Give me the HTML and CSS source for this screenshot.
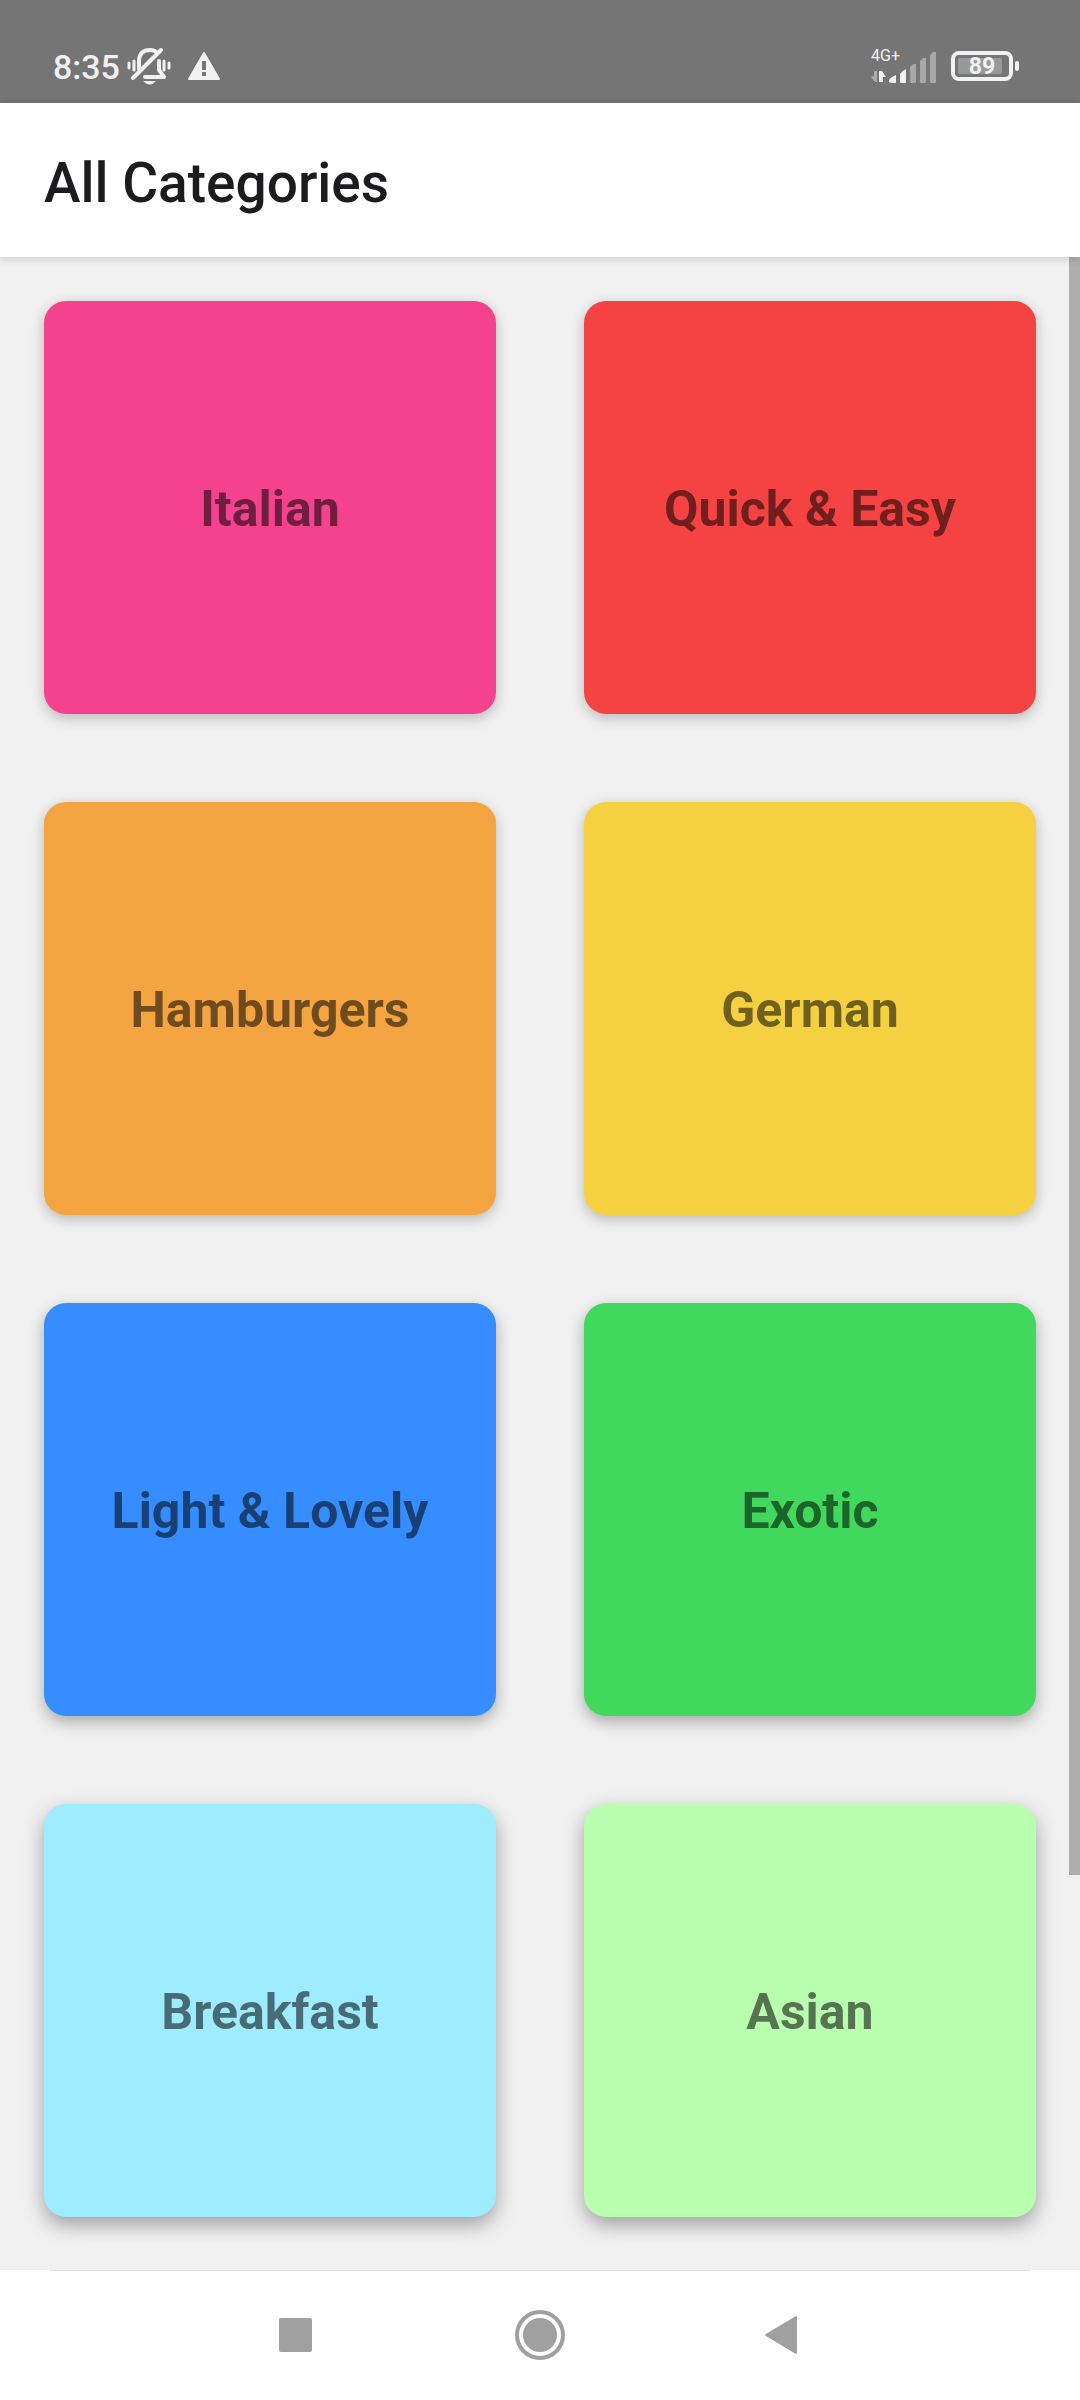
FILE: index.html
```html
<!DOCTYPE html>
<html lang="en">
<head>
<meta charset="utf-8">
<meta name="viewport" content="width=device-width, initial-scale=1">
<title>All Categories</title>
<link rel="stylesheet" href="styles.css">
</head>
<body>
<div class="screen">
  <div class="status">
    <div class="status-group">
      <span class="clock">8:35</span>
      <svg class="icon-mute" viewBox="0 0 46 40" width="46" height="40" fill="none" stroke="#f1f1f1" stroke-linecap="round" aria-label="Vibrate">
        <path d="M3 17v5M8 15v9M38 15v9M43 17v5" stroke-width="3"/>
        <path d="M13 23V14Q14 4 24 4Q29 4 31 7M33 15V24L38 31H19" stroke-width="4" stroke-linejoin="round"/>
        <path d="M7 32L35 4" stroke-width="4"/>
        <path d="M17 35H30Q24 42 17 35Z" fill="#f1f1f1" stroke="none"/>
      </svg>
      <svg class="icon-warn" viewBox="0 0 32 28" width="32" height="28" aria-label="Warning">
        <path d="M16 1L31 27H1Z" fill="#f1f1f1" stroke="#f1f1f1" stroke-width="2" stroke-linejoin="round"/>
        <path d="M14 9h4v9h-4zM14 20h4v4h-4z" fill="#757575"/>
      </svg>
    </div>
    <div class="status-group">
      <div class="network">
        <span class="network-type">4G+</span>
        <svg viewBox="0 0 68 32" width="68" height="32" aria-label="Signal strength">
          <path d="M1 25L4 24V19H7V30H5Z" fill="#aaa"/>
          <path d="M9 30V19H12L16 25H13V30Z" fill="#f1f1f1"/>
          <path d="M19 29Q19 26 26 23V30Q26 31 25 31H21Q19 31 19 29ZM30 30V22Q32 19 36 17V30Q36 31 35 31H31Q30 31 30 30Z" fill="#f1f1f1"/>
          <path d="M40 30V15L43 12H46V30L45 31H41ZM50 30V9L53 6H56V30L55 31H51ZM60 30V3L63 0H66V30L65 31H61Z" fill="#a8a8a8"/>
        </svg>
      </div>
      <div class="battery"><span class="battery-level">89</span></div>
    </div>
  </div>
  <header class="header"><h1>All Categories</h1></header>
  <main class="content">
    <div class="grid">
      <button class="card pink" type="button">Italian</button>
      <button class="card red" type="button">Quick &amp; Easy</button>
      <button class="card orange" type="button">Hamburgers</button>
      <button class="card yellow" type="button">German</button>
      <button class="card blue deep" type="button">Light &amp; Lovely</button>
      <button class="card green deep" type="button">Exotic</button>
      <button class="card cyan deepest" type="button">Breakfast</button>
      <button class="card lime deepest" type="button">Asian</button>
    </div>
    <div class="scrollbar"></div>
  </main>
  <nav class="nav">
    <button type="button" aria-label="Recent apps"><svg viewBox="0 0 52 52" width="52" height="52"><rect x="9" y="9" width="33" height="34" rx="2" fill="#a0a0a0"/></svg></button>
    <button type="button" aria-label="Home"><svg viewBox="0 0 52 52" width="52" height="52"><circle cx="26" cy="26" r="23" fill="none" stroke="#a0a0a0" stroke-width="4"/><circle cx="26" cy="26" r="17" fill="#a0a0a0"/></svg></button>
    <button type="button" aria-label="Back"><svg viewBox="0 0 52 52" width="52" height="52"><path d="M8 26L38 8V44Z" fill="#a0a0a0" stroke="#a0a0a0" stroke-width="2" stroke-linejoin="round"/></svg></button>
  </nav>
</div>
</body>
</html>
```

FILE: styles.css
```css
* { box-sizing: border-box; }

body {
  margin: 0;
  font-family: Roboto, sans-serif;
  background: #fff;
}

button {
  border: 0;
  padding: 0;
  font: inherit;
  cursor: pointer;
}

svg { display: block; }

.screen {
  display: flex;
  flex-direction: column;
  min-height: 100vh;
}

.status {
  display: flex;
  justify-content: space-between;
  align-items: center;
  height: 103px;
  padding: 28px 67px 0 53px;
  background: #757575;
  color: #f1f1f1;
}

.status-group {
  display: flex;
  align-items: center;
}

.clock {
  padding-top: 2px;
  font-size: 34px;
  font-weight: 500;
  line-height: 40px;
}

.icon-mute { margin-left: 6px; }
.icon-warn { margin-left: 16px; }

.network { position: relative; }

.network svg { margin-top: 4px; }

.network-type {
  position: absolute;
  left: 1px;
  top: 0;
  font-size: 16px;
  line-height: 16px;
}

.battery {
  position: relative;
  width: 62px;
  height: 30px;
  margin-left: 13px;
  padding: 3px;
  border: 4px solid #f1f1f1;
  border-radius: 8px;
}

.battery::after {
  content: "";
  position: absolute;
  right: -10px;
  top: 6px;
  width: 4px;
  height: 10px;
  border-radius: 2px;
  background: #f1f1f1;
}

.battery-level {
  display: block;
  width: 44px;
  height: 16px;
  padding-left: 4px;
  border-radius: 2px;
  background: #999;
  font-size: 23px;
  font-weight: 700;
  line-height: 18px;
  text-align: center;
}

.header {
  position: relative;
  z-index: 1;
  padding: 48px 44px 42px;
  background: #fff;
  box-shadow: 0 2px 8px rgba(0, 0, 0, 0.16);
}

.header h1 {
  margin: 0;
  color: #1c1c1e;
  font-size: 55px;
  font-weight: 500;
  line-height: 64px;
}

.content {
  position: relative;
  flex: 1;
  padding: 44px;
  background: #f1f1f1;
}

.grid {
  display: grid;
  grid-template-columns: 1fr 1fr;
  gap: 88px;
}

.card {
  height: 413px;
  padding-top: 3px;
  border-radius: 22px;
  color: rgba(0, 0, 0, 0.54);
  font-size: 50px;
  font-weight: 700;
  box-shadow: 0 4px 14px rgba(0, 0, 0, 0.24);
}

.deep { box-shadow: 0 6px 16px rgba(0, 0, 0, 0.3); }
.deepest { box-shadow: 0 8px 20px rgba(0, 0, 0, 0.34); }

.pink { background: #f5428d; }
.red { background: #f54242; }
.orange { background: #f5a442; }
.yellow { background: #f5d142; }
.blue { background: #368dff; }
.green { background: #41d95d; }
.cyan { background: #9eecff; }
.lime { background: #b9ffb0; }

.scrollbar {
  position: absolute;
  right: 0;
  top: 0;
  width: 11px;
  height: 80.4%;
  background: #aeaeae;
}

.nav {
  position: relative;
  display: flex;
  justify-content: center;
  gap: 192px;
  padding: 39px 0;
  background: #fff;
}

.nav::before {
  content: "";
  position: absolute;
  top: 0;
  left: 50px;
  right: 50px;
  height: 1px;
  background: #e0e0e0;
}

.nav button { background: none; }
```
